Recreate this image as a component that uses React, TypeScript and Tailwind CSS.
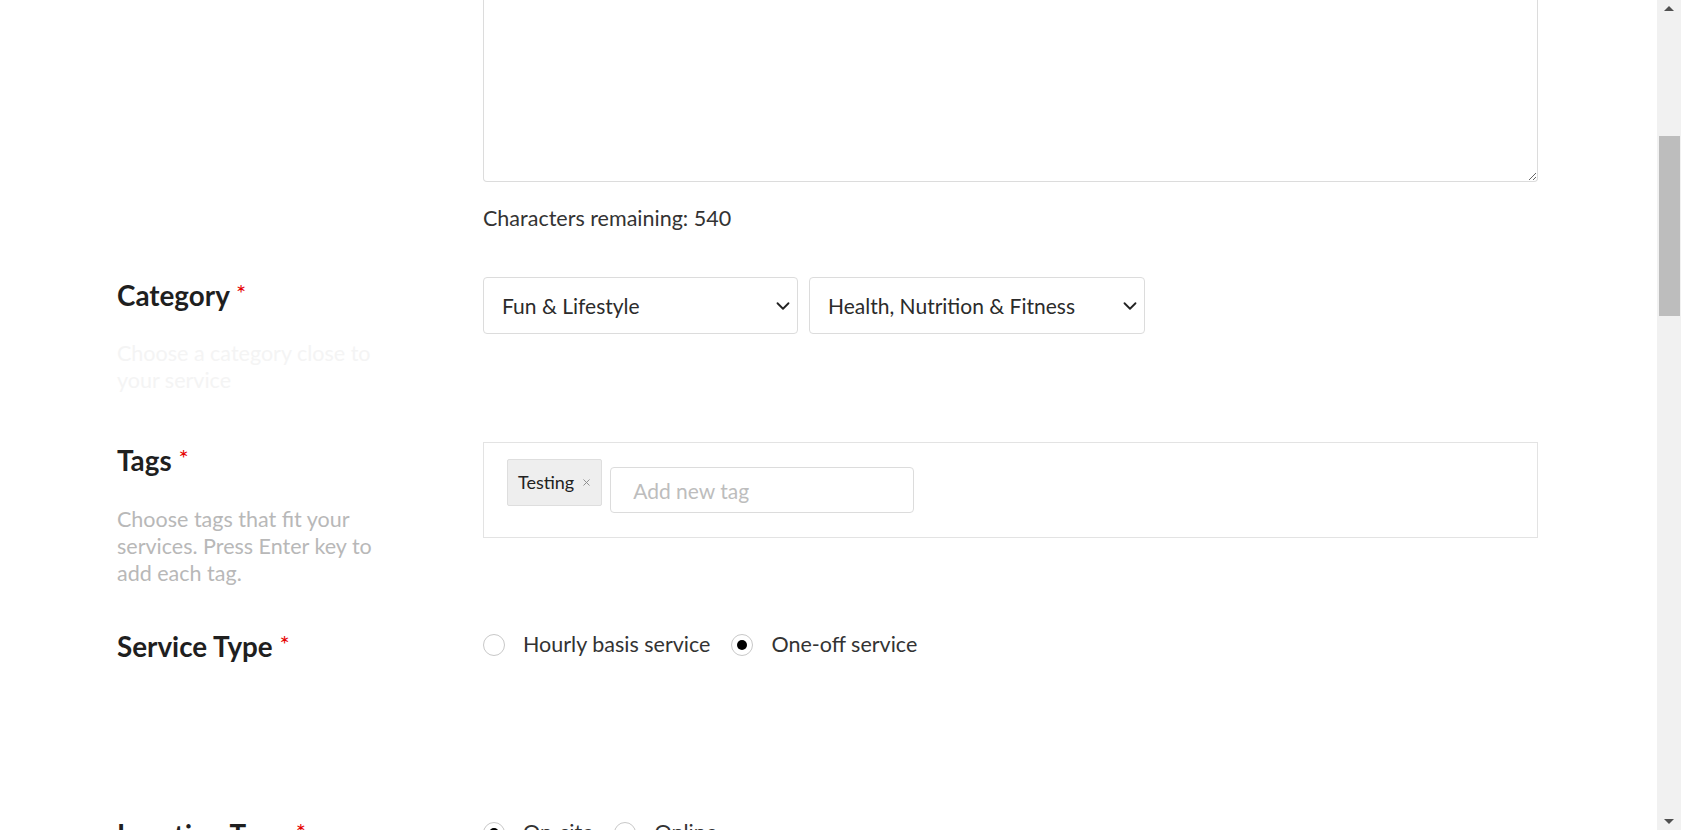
import { ChevronDown, X } from 'lucide-react';

const font = { fontFamily: 'Lato, "Open Sans", sans-serif' };

function Heading({ children }: { children: string }) {
  return (
    <h3 className="mt-[4px] text-[27.8px] font-bold leading-[29px] text-[#1f1f1f]">
      {children} <span className="relative -top-[3px] align-top text-[24px] font-normal text-[#e60000]">*</span>
    </h3>
  );
}

function Radio({ label, checked }: { label: string; checked?: boolean }) {
  return (
    <label className="flex items-center gap-[18px]">
      <span className="flex h-[22px] w-[22px] items-center justify-center rounded-full border border-[#c8c8c8] bg-white">
        {checked && <span className="h-[10px] w-[10px] rounded-full bg-black" />}
      </span>
      <span className="text-[21.5px] leading-[29px] text-[#333]">{label}</span>
    </label>
  );
}

function SelectBox({ value, width }: { value: string; width: string }) {
  return (
    <div className={`relative h-[57px] ${width}`}>
      <select
        defaultValue={value}
        className="h-full w-full appearance-none rounded-[4px] border border-[#dcdcdc] bg-white pl-[18px] pr-10 text-[21px] text-[#2b2b2b] outline-none"
      >
        <option>{value}</option>
      </select>
      <ChevronDown
        aria-hidden
        strokeWidth={2}
        className="pointer-events-none absolute right-[4px] top-1/2 h-[22px] w-[22px] -translate-y-1/2 text-[#222]"
      />
    </div>
  );
}

function Scrollbar() {
  return (
    <div className="flex h-full w-[24px] shrink-0 flex-col items-center bg-[#f1f1f1]">
      <div className="mt-[6px] h-0 w-0 border-x-[5px] border-b-[5px] border-x-transparent border-b-[#505050]" />
      <div className="mt-[125px] h-[180px] w-[21px] bg-[#bdbdbd]" />
      <div className="flex-1" />
      <div className="mb-[6px] h-0 w-0 border-x-[5px] border-t-[5px] border-x-transparent border-t-[#505050]" />
    </div>
  );
}

export default function App() {
  return (
    <div className="flex h-[830px] overflow-hidden bg-white" style={font}>
      <main className="flex min-w-0 flex-1 flex-col pl-[117px] pr-[119px]">
        {/* Description (tail of the textarea) */}
        <div className="grid grid-cols-[366px_1fr]">
          <div />
          <div>
            <textarea
              className="block h-[182px] w-full resize-y rounded-b-[4px] border border-t-0 border-[#dcdcdc] outline-none"
              defaultValue=""
            />
            <p className="mt-[24px] text-[21.5px] leading-[24px] text-[#333]">Characters remaining: 540</p>
          </div>
        </div>

        {/* Category */}
        <div className="mt-[47px] grid grid-cols-[366px_1fr]">
          <div>
            <Heading>Category</Heading>
            <p className="mt-[30px] w-[265px] text-[21.5px] leading-[27px] text-[#f4f4f4]">
              Choose a category close to your service
            </p>
          </div>
          <div className="flex gap-[11px]">
            <SelectBox value="Fun & Lifestyle" width="w-[315px]" />
            <SelectBox value="Health, Nutrition & Fitness" width="w-[336px]" />
          </div>
        </div>

        {/* Tags */}
        <div className="mt-[48px] grid grid-cols-[366px_1fr]">
          <div>
            <Heading>Tags</Heading>
            <p className="mt-[31px] w-[270px] text-[21.5px] leading-[27px] text-[#b8b8b8]">
              Choose tags that fit your services. Press Enter key to add each tag.
            </p>
          </div>
          <div>
            <div className="flex h-[96px] items-start gap-[8px] border border-[#e3e3e3] pl-[23px] pt-[16px]">
              <span className="flex h-[47px] items-center gap-[7px] rounded-[2px] border border-[#dedede] bg-[#eeeeee] pl-[10px] pr-[9px] text-[18px] text-[#222]">
                Testing
                <X aria-hidden className="h-[11px] w-[11px] text-[#888]" strokeWidth={2} />
              </span>
              <input
                placeholder="Add new tag"
                className="mt-[8px] h-[46px] w-[304px] rounded-[4px] border border-[#dcdcdc] px-[22px] text-[21px] text-[#333] outline-none placeholder:text-[#bdbdbd]"
              />
            </div>
          </div>
        </div>

        {/* Service Type */}
        <div className="mt-[41px] grid grid-cols-[366px_1fr]">
          <div>
            <Heading>Service Type</Heading>
          </div>
          <div className="mt-[2px] flex h-[29px] items-center gap-[21px]">
            <Radio label="Hourly basis service" />
            <Radio label="One-off service" checked />
          </div>
        </div>

        {/* Location Type */}
        <div className="mt-[155px] grid grid-cols-[366px_1fr]">
          <div>
            <Heading>Location Type</Heading>
          </div>
          <div className="mt-[2px] flex h-[29px] items-center gap-[21px]">
            <Radio label="On-site" checked />
            <Radio label="Online" />
          </div>
        </div>
      </main>
      <Scrollbar />
    </div>
  );
}
